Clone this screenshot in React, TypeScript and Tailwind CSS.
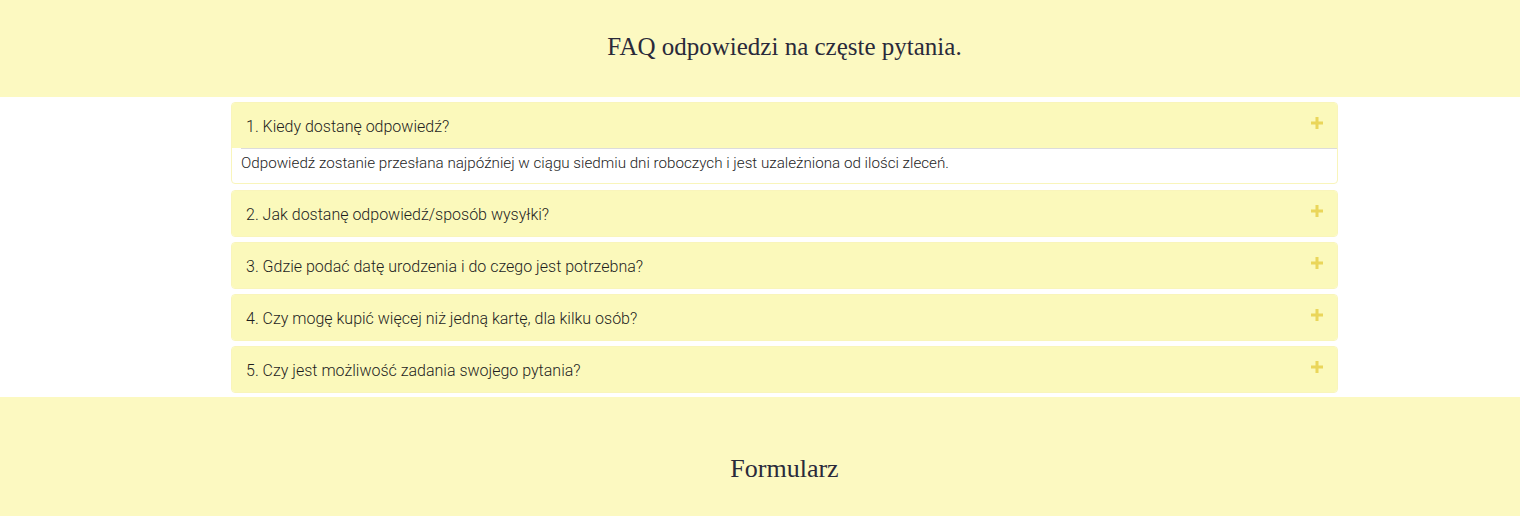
import React, { useState } from 'react';

const faqs = [
  {
    q: '1. Kiedy dostanę odpowiedź?',
    a: 'Odpowiedź zostanie przesłana najpóźniej w ciągu siedmiu dni roboczych i jest uzależniona od ilości zleceń.',
  },
  { q: '2. Jak dostanę odpowiedź/sposób wysyłki?', a: '' },
  { q: '3. Gdzie podać datę urodzenia i do czego jest potrzebna?', a: '' },
  { q: '4. Czy mogę kupić więcej niż jedną kartę, dla kilku osób?', a: '' },
  { q: '5. Czy jest możliwość zadania swojego pytania?', a: '' },
];

const Plus = () => (
  <svg width="12" height="12" viewBox="0 0 12 12" className="text-[#ead65a]">
    <rect x="4.5" y="0" width="3" height="12" fill="currentColor" />
    <rect x="0" y="4.5" width="12" height="3" fill="currentColor" />
  </svg>
);

const App: React.FC = () => {
  const [open, setOpen] = useState<number>(0);

  return (
    <div className="min-h-screen bg-white" style={{ fontFamily: 'Roboto, "Liberation Sans", sans-serif' }}>
      {/* top band */}
      <section className="h-[97px] bg-[#fcf9c1]">
        <div className="ml-[231px] w-[1107px] h-full flex items-center justify-center">
          <h2 className="text-[25px] text-[#2a2a3a] pb-[4px]" style={{ fontFamily: '"Liberation Serif", "DejaVu Serif", serif' }}>
            FAQ odpowiedzi na częste pytania.
          </h2>
        </div>
      </section>

      {/* accordion */}
      <section className="pt-[5px] pb-[4px]">
        <div className="ml-[231px] w-[1107px] flex flex-col gap-[5px]">
          {faqs.map((item, i) => (
            <div
              key={i}
              className={`rounded-[4px] border border-[#f9f5bb] ${i === 0 ? 'mb-[1px]' : ''} bg-white overflow-hidden`}
            >
              <button
                onClick={() => setOpen(open === i ? -1 : i)}
                className="w-full h-[45px] bg-[#fbf9bb] flex items-center justify-between pl-[14px] pr-[14px] text-left"
              >
                <span className="text-[16px] font-light text-[#1e1e1e] pt-[2px]">{item.q}</span>
                <span className="-mt-[6px]">
                  <Plus />
                </span>
              </button>
              {open === i && item.a && (
                <div className="pl-[9px]">
                  <div className="border-t border-[#dcdcdc] h-[35px] flex items-center">
                    <p className="text-[15.2px] font-light text-[#1e1e1e] pb-[6px]">{item.a}</p>
                  </div>
                </div>
              )}
            </div>
          ))}
        </div>
      </section>

      {/* bottom band */}
      <section className="h-[119px] bg-[#fcf9c1]">
        <div className="ml-[231px] w-[1107px] pt-[52px] flex justify-center">
          <h2 className="text-[26px] text-[#2a2a3a]" style={{ fontFamily: '"Liberation Serif", "DejaVu Serif", serif' }}>
            Formularz
          </h2>
        </div>
      </section>
    </div>
  );
};

export default App;
